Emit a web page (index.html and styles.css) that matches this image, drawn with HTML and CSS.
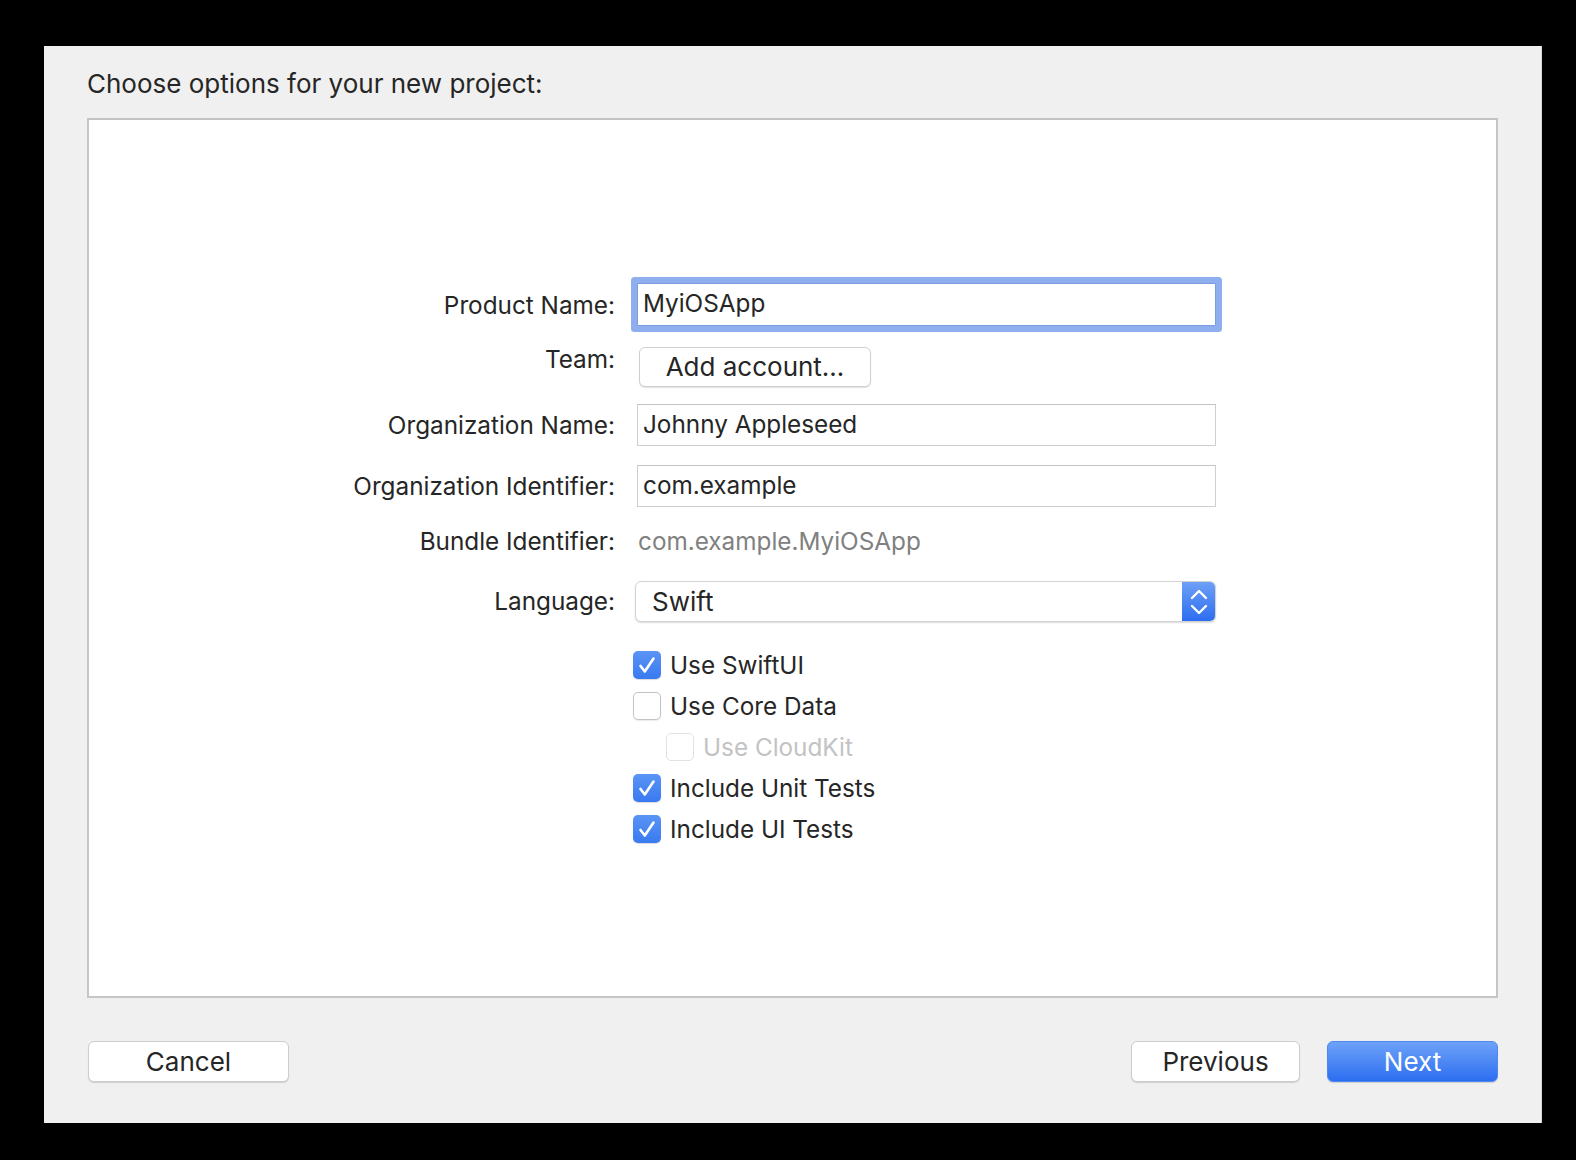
FILE: index.html
```html
<!DOCTYPE html>
<html lang="en">
<head>
<meta charset="utf-8">
<title>Choose options for your new project</title>
<link rel="stylesheet" href="styles.css">
</head>
<body>
<div class="window">
  <h1 class="title">Choose options for your new project:</h1>
  <div class="panel">
    <div class="form">
      <div class="row row-product">
        <div class="label">Product Name:</div>
        <div class="control"><div class="field focused">MyiOSApp</div></div>
      </div>
      <div class="row row-team">
        <div class="label label-team">Team:</div>
        <div class="control"><div class="push-btn">Add account…</div></div>
      </div>
      <div class="row row-org">
        <div class="label">Organization Name:</div>
        <div class="control"><div class="field">Johnny Appleseed</div></div>
      </div>
      <div class="row row-orgid">
        <div class="label">Organization Identifier:</div>
        <div class="control"><div class="field">com.example</div></div>
      </div>
      <div class="row row-bundle">
        <div class="label">Bundle Identifier:</div>
        <div class="control"><div class="static">com.example.MyiOSApp</div></div>
      </div>
      <div class="row row-lang">
        <div class="label label-lang">Language:</div>
        <div class="control">
          <div class="select">
            <span class="select-value">Swift</span>
            <span class="stepper">
              <svg width="34" height="41" viewBox="0 0 34 41"><path d="M10 17 L17 10 L24 17" fill="none" stroke="#fff" stroke-width="2.4" stroke-linecap="round" stroke-linejoin="round"/><path d="M10 25 L17 32 L24 25" fill="none" stroke="#fff" stroke-width="2.4" stroke-linecap="round" stroke-linejoin="round"/></svg>
            </span>
          </div>
        </div>
      </div>
      <div class="row check-row first">
        <div class="label"></div>
        <div class="control check">
          <span class="box checked"><svg width="28" height="28" viewBox="0 0 28 28"><path d="M7.5 15 L11.8 20.5 L20.5 7.5" fill="none" stroke="#fff" stroke-width="2.6" stroke-linecap="round" stroke-linejoin="round"/></svg></span>
          <span class="check-text">Use SwiftUI</span>
        </div>
      </div>
      <div class="row check-row">
        <div class="label"></div>
        <div class="control check">
          <span class="box"></span>
          <span class="check-text">Use Core Data</span>
        </div>
      </div>
      <div class="row check-row">
        <div class="label"></div>
        <div class="control check indent disabled">
          <span class="box"></span>
          <span class="check-text">Use CloudKit</span>
        </div>
      </div>
      <div class="row check-row">
        <div class="label"></div>
        <div class="control check">
          <span class="box checked"><svg width="28" height="28" viewBox="0 0 28 28"><path d="M7.5 15 L11.8 20.5 L20.5 7.5" fill="none" stroke="#fff" stroke-width="2.6" stroke-linecap="round" stroke-linejoin="round"/></svg></span>
          <span class="check-text">Include Unit Tests</span>
        </div>
      </div>
      <div class="row check-row">
        <div class="label"></div>
        <div class="control check">
          <span class="box checked"><svg width="28" height="28" viewBox="0 0 28 28"><path d="M7.5 15 L11.8 20.5 L20.5 7.5" fill="none" stroke="#fff" stroke-width="2.6" stroke-linecap="round" stroke-linejoin="round"/></svg></span>
          <span class="check-text">Include UI Tests</span>
        </div>
      </div>
    </div>
  </div>
  <div class="footer">
    <div class="btn btn-cancel">Cancel</div>
    <div class="spacer"></div>
    <div class="btn btn-prev">Previous</div>
    <div class="btn btn-next">Next</div>
  </div>
</div>
</body>
</html>
```

FILE: styles.css
```css
* { box-sizing: border-box; }

html, body {
  margin: 0;
  padding: 0;
  background: #000;
}

body {
  width: 1576px;
  height: 1160px;
  overflow: hidden;
  font-family: Inter, "Noto Sans", "Liberation Sans", sans-serif;
  font-size: 26px;
  color: #262626;
}

.window {
  margin: 46px 0 0 44px;
  width: 1498px;
  height: 1077px;
  background: #f0f0f0;
  padding: 22px 43px 41px 43px;
  display: flex;
  flex-direction: column;
  border-right: 1px solid #d6d6d6;
}

.title {
  margin: 0 0 18px 0;
  font-size: 26px;
  font-weight: 400;
  line-height: 32px;
  color: #262626;
}

.panel {
  flex: 1;
  background: #fff;
  border: 2px solid #c6c6c6;
  border-top-color: #c2c2c2;
}

.form {
  display: flex;
  flex-direction: column;
  padding-top: 163px;
}

.row {
  display: flex;
  align-items: center;
}

.label {
  width: 526px;
  flex: none;
  text-align: right;
  white-space: nowrap;
  font-size: 24.3px;
  line-height: 32px;
  color: #262626;
}

.control {
  margin-left: 18px;
  display: flex;
  align-items: center;
}

/* row spacing */
.row-product { height: 43px; }
.row-team { margin-top: 21px; height: 40px; align-items: flex-start; }
.row-org { margin-top: 17px; height: 42px; }
.row-orgid { margin-top: 19px; height: 42px; }
.row-bundle { margin-top: 13px; height: 42px; }
.row-lang { margin-top: 19px; height: 41px; }
.check-row { margin-top: 12px; height: 29px; }
.check-row.first { margin-top: 28px; }

.label-team { line-height: 24px; }
.label-lang { margin-top: -2px; }

/* text fields */
.field {
  margin-left: 4px;
  width: 579px;
  height: 42px;
  border: 1.5px solid #cfcfcf;
  border-top-color: #c4c4c4;
  background: #fff;
  padding: 0 0 0 5px;
  font-size: 24.3px;
  line-height: 39px;
  color: #262626;
  white-space: nowrap;
}

.field.focused {
  height: 43px;
  border: 1px solid #7b9ddf;
  box-shadow: 0 0 0 6px #8eaeee;
  border-radius: 1px;
}

/* push button */
.push-btn {
  margin-left: 6px;
  width: 232px;
  height: 40px;
  background: #fff;
  border: 1px solid #d0d0d0;
  border-radius: 6px;
  box-shadow: 0 1px 1px rgba(0, 0, 0, 0.12);
  text-align: center;
  line-height: 38px;
  color: #262626;
}

.static {
  margin-left: 5px;
  font-size: 24.3px;
  color: #808080;
  line-height: 32px;
}

/* popup */
.select {
  margin-left: 2px;
  width: 581px;
  height: 41px;
  background: #fff;
  border: 1px solid #d3d3d3;
  border-radius: 6px;
  box-shadow: 0 1px 1.5px rgba(0, 0, 0, 0.14);
  display: flex;
  align-items: center;
  overflow: hidden;
}

.select-value {
  flex: 1;
  padding-left: 16px;
  line-height: 39px;
  color: #262626;
}

.stepper {
  width: 34px;
  height: 41px;
  margin: -1px -1px -1px 0;
  background: linear-gradient(#6fa1f7, #2b6cf0);
  border-radius: 0 6px 6px 0;
  display: flex;
}

/* checkboxes */
.check { gap: 9px; }
.check.indent { margin-left: 51px; }

.box {
  width: 28px;
  height: 28px;
  flex: none;
  border-radius: 5px;
  background: #fff;
  border: 1.5px solid #c4c4c4;
  box-shadow: 0 0.5px 1px rgba(0, 0, 0, 0.08);
  display: flex;
}

.box.checked {
  border: none;
  background: linear-gradient(#5a94f5, #3a7af1);
  box-shadow: 0 0.5px 1px rgba(0, 0, 0, 0.15);
}

.check-text {
  font-size: 24.3px;
  line-height: 32px;
  color: #262626;
  white-space: nowrap;
}

.check.disabled .box {
  border-color: #e2e2e2;
  box-shadow: none;
}

.check.disabled .check-text { color: #c3c3c3; }

/* footer */
.footer {
  margin-top: 43px;
  height: 41px;
  display: flex;
  align-items: stretch;
}

.spacer { flex: 1; }

.btn {
  height: 41px;
  background: #fff;
  border: 1px solid #cdcdcd;
  border-radius: 6px;
  box-shadow: 0 1px 1px rgba(0, 0, 0, 0.14);
  text-align: center;
  line-height: 39px;
  color: #262626;
}

.btn-cancel { width: 201px; margin-left: 1px; }
.btn-prev { width: 169px; }
.btn-next {
  width: 171px;
  margin-left: 27px;
  color: #fff;
  border: 1px solid #4f88f2;
  background: linear-gradient(#6ea2f8, #2c6ef1);
}
```
